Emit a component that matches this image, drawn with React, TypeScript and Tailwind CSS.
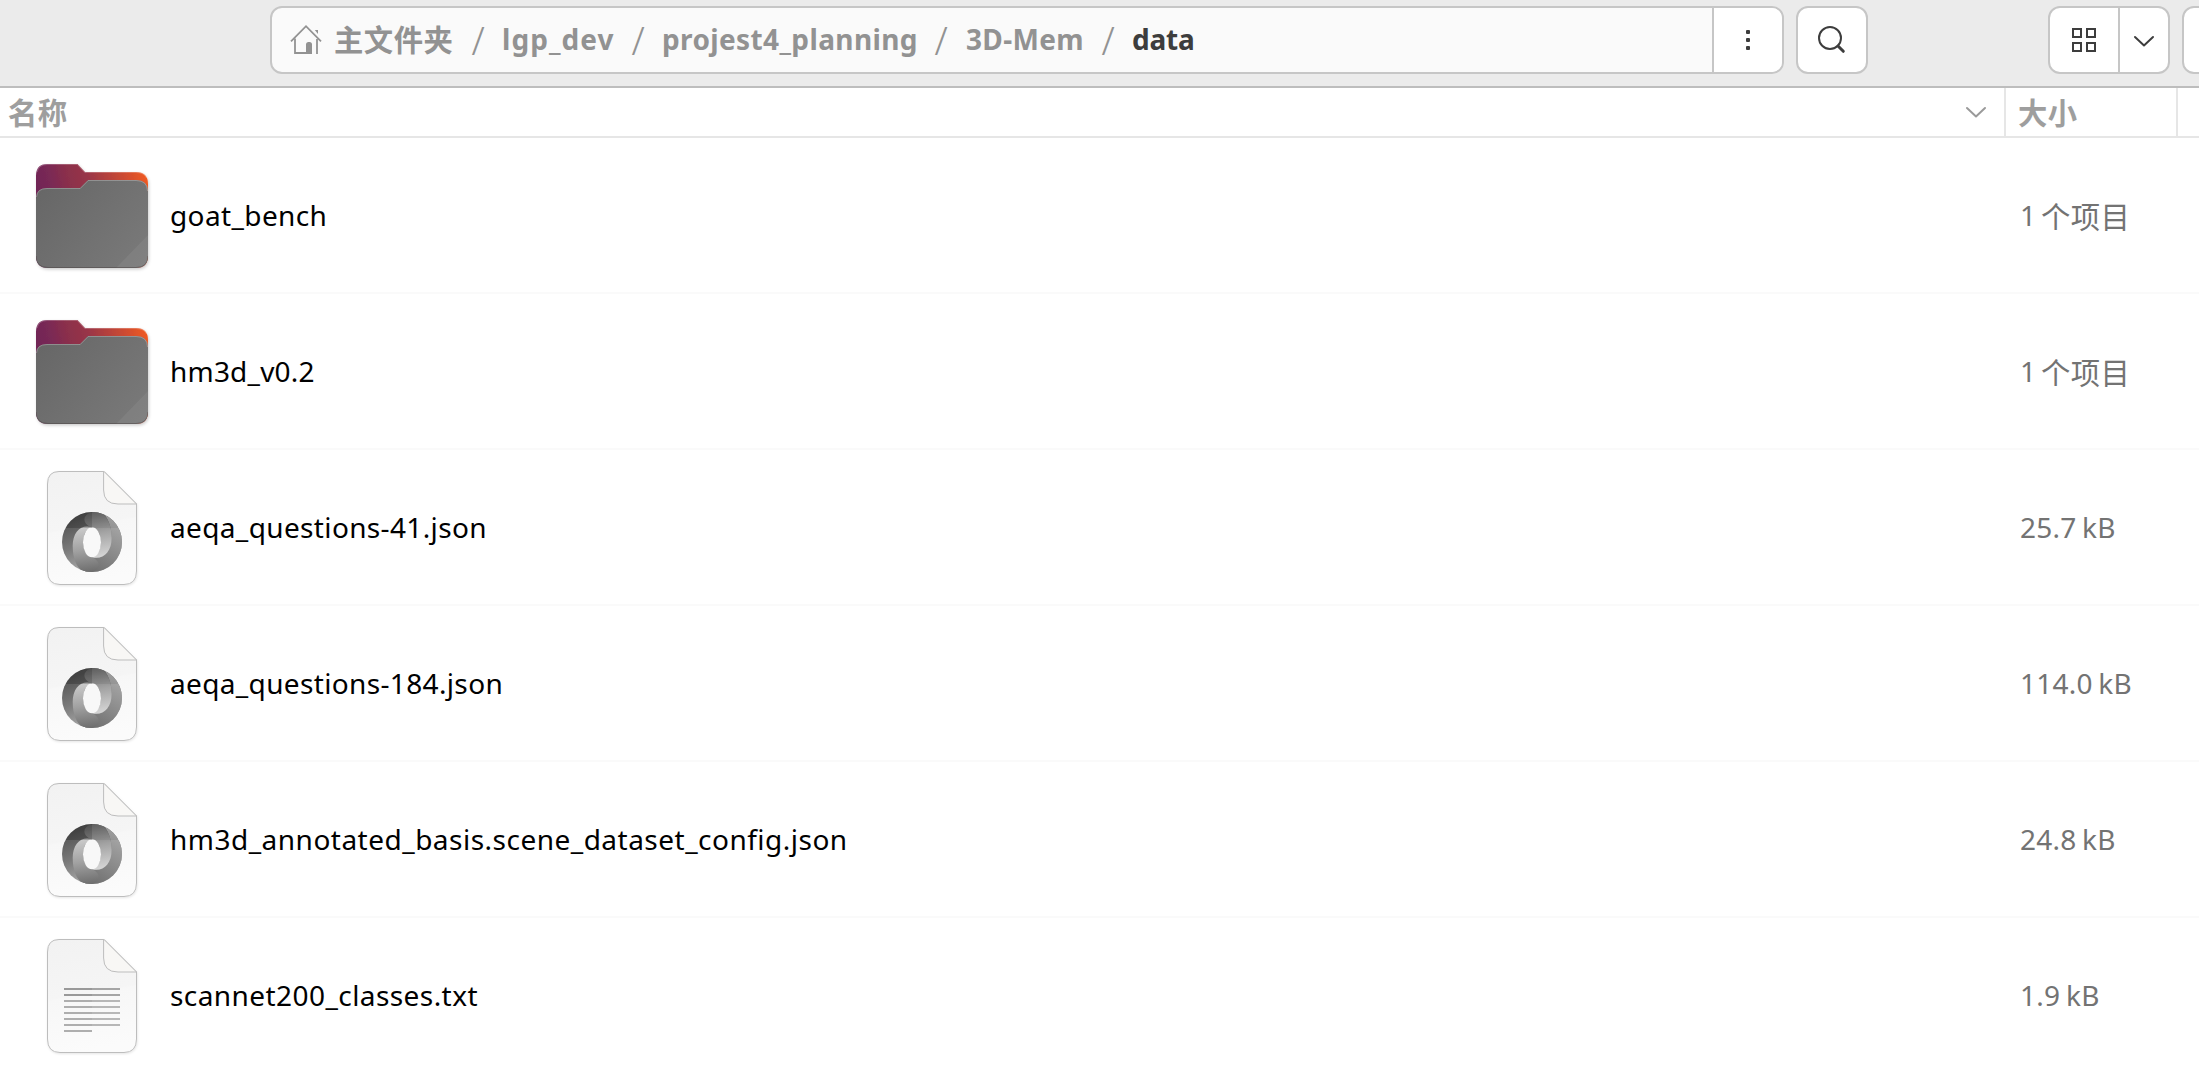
import type { ReactNode } from "react";

type Kind = "folder" | "json" | "text";

interface Entry {
  kind: Kind;
  name: string;
  nameClass: string;
  size: ReactNode;
  sizeClass: string;
}

const entries: Entry[] = [
  { kind: "folder", name: "goat_bench", nameClass: "tracking-[0.38px]", size: <ItemCount />, sizeClass: "" },
  { kind: "folder", name: "hm3d_v0.2", nameClass: "tracking-[0.2px]", size: <ItemCount />, sizeClass: "" },
  { kind: "json", name: "aeqa_questions-41.json", nameClass: "tracking-[0.36px]", size: "25.7 kB", sizeClass: "tracking-[0.25px]" },
  { kind: "json", name: "aeqa_questions-184.json", nameClass: "tracking-[0.35px]", size: "114.0 kB", sizeClass: "tracking-[0.25px]" },
  { kind: "json", name: "hm3d_annotated_basis.scene_dataset_config.json", nameClass: "tracking-[0.49px]", size: "24.8 kB", sizeClass: "tracking-[0.25px]" },
  { kind: "text", name: "scannet200_classes.txt", nameClass: "tracking-[0.43px]", size: "1.9 kB", sizeClass: "tracking-[0.3px]" },
];

const crumbs = [
  { label: "lgp_dev", cls: "w-[110px] tracking-[1.05px] -indent-px text-[#929292]" },
  { label: "projest4_planning", cls: "w-[253px] tracking-[0.38px] -indent-px text-[#929292]" },
  { label: "3D-Mem", cls: "w-[117px] tracking-[0.35px] text-[#929292]" },
  { label: "data", cls: "w-[60px] tracking-[-0.2px] -indent-px text-[#3d3d3d]" },
];

function ItemCount() {
  return (
    <span className="flex items-center">
      <span className="w-[21px]">1</span>
      <span className="pt-0.5 font-['Noto_Sans_CJK_SC',sans-serif] text-[29.33px] tracking-[0.4px]">个项目</span>
    </span>
  );
}

function HomeIcon() {
  return (
    <svg width="32" height="32" viewBox="0 0 32 32" fill="none" stroke="#929292" strokeWidth="1.8">
      <path d="M1 17.4 16 2.2 31 17.4" />
      <path d="M5 14.5V29H20M27 15V30" />
      <path d="M16 29V20.5Q16 18 18.5 18H19.5Q22 18 22 20.5V30H16Z" fill="#929292" stroke="none" />
      <path d="M24.8 6H28V10Z" fill="#929292" stroke="none" />
    </svg>
  );
}

function ChevronIcon({ color }: { color: string }) {
  return (
    <svg width="24" height="16" viewBox="0 0 24 16" fill="none" stroke={color} strokeWidth="2" strokeLinecap="round" strokeLinejoin="round">
      <path d="M3 4 12 12.4 21 4" />
    </svg>
  );
}

function FolderIcon() {
  return (
    <svg width="128" height="128" viewBox="0 0 128 128" className="shrink-0">
      <defs>
        <linearGradient id="folder-back" x1="8" y1="44" x2="118" y2="18" gradientUnits="userSpaceOnUse">
          <stop offset="0" stopColor="#6f2456" />
          <stop offset="0.15" stopColor="#792955" />
          <stop offset="0.3" stopColor="#8a2f4c" />
          <stop offset="0.48" stopColor="#983548" />
          <stop offset="0.75" stopColor="#c44736" />
          <stop offset="1" stopColor="#f05a22" />
        </linearGradient>
        <linearGradient id="folder-front" x1="14" y1="36" x2="114" y2="116" gradientUnits="userSpaceOnUse">
          <stop offset="0" stopColor="#676767" />
          <stop offset="1" stopColor="#7a7a7a" />
        </linearGradient>
        <clipPath id="folder-clip">
          <path d="M8 47Q8 36 19 36H52L60 28H108Q120 28 120 40V104Q120 116 108 116H20Q8 116 8 104Z" />
        </clipPath>
        <filter id="folder-shadow" x="-10%" y="-10%" width="120%" height="125%">
          <feDropShadow dx="1" dy="1.5" stdDeviation="1.5" floodColor="#000" floodOpacity="0.2" />
        </filter>
      </defs>
      <path filter="url(#folder-shadow)" d="M8 24Q8 12 19 12H49.5L57 20H108Q120 20 120 32V104Q120 116 108 116H20Q8 116 8 104Z" fill="url(#folder-back)" />
      <path d="M9 20Q11 12.5 19 12.5H49.3L56.8 20.5H108Q116 20.5 118.6 26" fill="none" stroke="#fff" strokeOpacity="0.22" />
      <g clipPath="url(#folder-clip)">
        <rect width="128" height="128" fill="url(#folder-front)" />
        <path d="M120 83 88 116H120Z" fill="#fff" fillOpacity="0.06" />
        <path d="M8 104Q8 115.5 20 115.5H108Q120 115.5 120 104" fill="none" stroke="#4f4747" strokeOpacity="0.55" />
      </g>
      <path d="M8.5 45Q9 36.5 19 36.5H52.2L60.2 28.5H108Q119.5 28.5 119.5 39" fill="none" stroke="#fff" strokeOpacity="0.25" />
    </svg>
  );
}

function DocumentIcon({ kind }: { kind: "json" | "text" }) {
  return (
    <svg width="128" height="128" viewBox="0 0 128 128" className="shrink-0">
      <defs>
        <linearGradient id="paper" x1="30" y1="8" x2="50" y2="120" gradientUnits="userSpaceOnUse">
          <stop offset="0" stopColor="#f2f2f2" />
          <stop offset="0.5" stopColor="#f5f5f5" />
          <stop offset="0.52" stopColor="#f7f7f7" />
          <stop offset="1" stopColor="#fbfbfb" />
        </linearGradient>
        <linearGradient id="ring" x1="46" y1="52" x2="66" y2="108" gradientUnits="userSpaceOnUse">
          <stop offset="0" stopColor="#505050" />
          <stop offset="0.5" stopColor="#7a7a7a" />
          <stop offset="1" stopColor="#b0b0b0" />
        </linearGradient>
        <linearGradient id="ring-outer" x1="90" y1="60" x2="60" y2="108" gradientUnits="userSpaceOnUse">
          <stop offset="0" stopColor="#a6a6a6" />
          <stop offset="0.5" stopColor="#8a8a8a" />
          <stop offset="1" stopColor="#6c6c6c" />
        </linearGradient>
        <linearGradient id="ring-left" x1="54" y1="63" x2="60" y2="108" gradientUnits="userSpaceOnUse">
          <stop offset="0" stopColor="#cccccc" />
          <stop offset="0.5" stopColor="#a2a2a2" />
          <stop offset="1" stopColor="#6e6e6e" />
        </linearGradient>
        <linearGradient id="ring-right" x1="66" y1="48" x2="74" y2="94" gradientUnits="userSpaceOnUse">
          <stop offset="0" stopColor="#666666" />
          <stop offset="0.45" stopColor="#a2a2a2" />
          <stop offset="1" stopColor="#d8d8d8" />
        </linearGradient>
        <clipPath id="disc"><circle cx="64" cy="78" r="30" /></clipPath>
        <filter id="paper-shadow" x="-10%" y="-10%" width="120%" height="120%">
          <feDropShadow dx="0.5" dy="1" stdDeviation="1.2" floodColor="#000" floodOpacity="0.1" />
        </filter>
      </defs>
      <path filter="url(#paper-shadow)" d="M31 7.5H76L108.5 40V107Q108.5 120.5 96 120.5H32Q19.5 120.5 19.5 107V20Q19.5 7.5 31 7.5Z" fill="url(#paper)" stroke="#bdbdbd" />
      <path d="M75.6 8V26Q75.6 40 90 40H108.5L76 7.5Z" fill="#f8f7f5" stroke="#bdbdbd" strokeLinejoin="round" />
      {kind === "json" ? (
        <g clipPath="url(#disc)">
          <rect x="34" y="48" width="60" height="60" fill="url(#ring)" />
          <path d="M72 47C80 52 83.7 63 83.7 74C83.7 88 75 96 64 93.3C54 96 54 104 56 110H96V46Z" fill="url(#ring-outer)" />
          <path d="M64 63.3C52 60 54 46 72 48C80 52 83.7 63 83.7 74C83.7 88 75 96 64 93.3C76 90 76 66 64 63.3Z" fill="url(#ring-right)" />
          <path d="M64 93.3C74 97 74 110 56 108C48 104 44.7 93 44.7 82C44.7 68 53 60 64 63.3C52 66 52 90 64 93.3Z" fill="url(#ring-left)" />
          <ellipse cx="64" cy="78.3" rx="9" ry="15" fill="#f8f8f8" />
          <path d="M34 48H94V64H34Z" fill="#000" fillOpacity="0.07" />
          <path d="M34 48H64V64H34Z" fill="#000" fillOpacity="0.14" />
        </g>
      ) : (
        <g>
          {[56, 62, 68, 74, 80, 86, 92].map((y, i) => (
            <g key={y}>
              <rect x="36" y={y} width="28" height="2" fill={i < 2 ? "#999" : "#aeaeae"} />
              <rect x="64" y={y} width="28" height="2" fill={i < 2 ? "#a5a5a5" : "#b7b7b7"} />
            </g>
          ))}
          <rect x="36" y="98" width="28" height="2" fill="#aeaeae" />
        </g>
      )}
    </svg>
  );
}

function Toolbar() {
  return (
    <header className="flex h-[88px] shrink-0 items-start border-b-2 border-[#bdbdbd] bg-[#ebebeb] pt-1.5">
      <div className="ml-[270px] flex h-17 w-[1514px] shrink-0 overflow-hidden rounded-xl border-2 border-[#c6c6c6] bg-[#fafafa]">
        <nav className="flex min-w-0 flex-1 items-center pl-[18px] text-[28px] leading-none font-bold whitespace-nowrap">
          <HomeIcon />
          <span className="ml-3 w-[119px] pb-0.5 font-['Noto_Sans_CJK_SC',sans-serif] text-[29.33px] tracking-[0.5px] text-[#929292]">主文件夹</span>
          {crumbs.map((c) => (
            <span key={c.label} className="flex h-full items-center">
              <span className="flex w-[50px] justify-center text-[38px] font-light text-[#929292]">/</span>
              <span className={"pb-0.5 " + c.cls}>{c.label}</span>
            </span>
          ))}
        </nav>
        <button className="flex w-[70px] flex-col items-center justify-center gap-1 border-l-2 border-[#c6c6c6] bg-white">
          <i className="size-1 rounded-[1px] bg-[#3d3d3d]" />
          <i className="size-1 rounded-[1px] bg-[#3d3d3d]" />
          <i className="size-1 rounded-[1px] bg-[#3d3d3d]" />
        </button>
      </div>
      <button className="ml-3 flex h-17 w-18 shrink-0 items-center justify-center rounded-xl border-2 border-[#c6c6c6] bg-white">
        <svg width="32" height="32" viewBox="0 0 32 32" fill="none" stroke="#3d3d3d" strokeLinecap="round">
          <circle cx="14" cy="14" r="11" strokeWidth="2" />
          <path d="M22 22 27.3 27.3" strokeWidth="3" />
        </svg>
      </button>
      <div className="ml-45 flex h-17 w-[122px] shrink-0 overflow-hidden rounded-xl border-2 border-[#c6c6c6] bg-white">
        <button className="flex w-[70px] shrink-0 items-center justify-center border-r-2 border-[#c6c6c6]">
          <span className="grid grid-cols-2 gap-1">
            <i className="size-2.5 border-2 border-[#3d3d3d]" />
            <i className="size-2.5 border-2 border-[#3d3d3d]" />
            <i className="size-2.5 border-2 border-[#3d3d3d]" />
            <i className="size-2.5 border-2 border-[#3d3d3d]" />
          </span>
        </button>
        <button className="flex flex-1 items-center justify-center pt-0.5">
          <ChevronIcon color="#3d3d3d" />
        </button>
      </div>
      <button className="ml-3 h-17 w-18 shrink-0 rounded-xl border-2 border-[#c6c6c6] bg-white" />
    </header>
  );
}

export default function App() {
  return (
    <div className="flex h-screen w-full flex-col overflow-hidden bg-white font-['Noto_Sans','Noto_Sans_CJK_SC',sans-serif] text-[28px] leading-none">
      <Toolbar />
      <div className="flex h-[50px] shrink-0 border-b-2 border-[#e6e6e6] font-['Noto_Sans_CJK_SC',sans-serif] text-[29.33px] font-bold tracking-[0.4px] text-[#9e9e9e]">
        <div className="flex w-[2006px] shrink-0 items-center justify-between border-r-2 border-[#e6e6e6] pr-[16px] pl-2">
          <span>名称</span>
          <ChevronIcon color="#9a9a9a" />
        </div>
        <div className="flex w-[172px] shrink-0 items-center border-r-2 border-[#e6e6e6] pl-3">大小</div>
      </div>
      <main>
        {entries.map((e) => (
          <div key={e.name} className="flex h-39 items-center border-b-2 border-[#fafafa] whitespace-nowrap">
            <div className="flex w-[2006px] shrink-0 items-center pt-0.5 pl-7">
              {e.kind === "folder" ? <FolderIcon /> : <DocumentIcon kind={e.kind} />}
              <span className={"pb-[3px] pl-3.5 text-black " + e.nameClass}>{e.name}</span>
            </div>
            <div className={"pl-3.5 [word-spacing:-2px] text-[#737373] " + e.sizeClass}>{e.size}</div>
          </div>
        ))}
      </main>
    </div>
  );
}
